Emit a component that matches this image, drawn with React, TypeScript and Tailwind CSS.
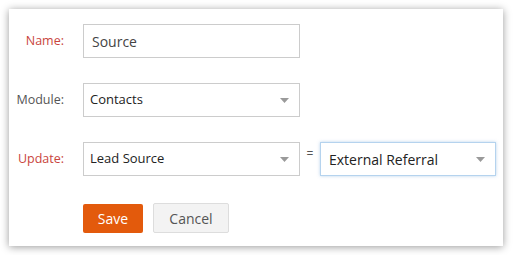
import React from "react";

function Caret() {
  return (
    <svg width="9" height="5" viewBox="0 0 9 5" className="shrink-0">
      <path d="M0 0 L9 0 L4.5 5 Z" fill="#9a9a9a" />
    </svg>
  );
}

function Label({ text, red }: { text: string; red?: boolean }) {
  return (
    <div
      className={`w-[74px] shrink-0 pr-[19px] text-right text-[12.5px] ${
        red ? "text-[#c9453d]" : "text-[#555555]"
      }`}
    >
      {text}
    </div>
  );
}

export default function App() {
  return (
    <div
      className="w-[513px] h-[255px] bg-white pt-[9px] pl-[9px]"
      style={{ fontFamily: '"Open Sans", "Noto Sans", sans-serif' }}
    >
      <div className="w-[494px] h-[237px] bg-white shadow-[0_1px_8px_rgba(0,0,0,0.4)] pt-[15px] flex flex-col">
        <div className="flex items-center h-[34px]">
          <Label text="Name:" red />
          <div className="w-[217px] h-[34px] border border-[#cccccc] flex items-center px-[8px] text-[14px] text-[#444444]">
            Source
          </div>
        </div>
        <div className="flex items-center h-[34px] mt-[25px]">
          <Label text="Module:" />
          <div className="w-[217px] h-[34px] border border-[#cccccc] flex items-center justify-between pl-[6px] pr-[10px] text-[13px] text-[#222222]">
            <span>Contacts</span>
            <Caret />
          </div>
        </div>
        <div className="flex items-center h-[34px] mt-[25px]">
          <Label text="Update:" red />
          <div className="w-[217px] h-[34px] border border-[#cccccc] flex items-center justify-between pl-[6px] pr-[10px] text-[13px] text-[#222222]">
            <span>Lead Source</span>
            <Caret />
          </div>
          <div className="w-[20px] text-center text-[12px] text-[#555555] self-start mt-[3px]">=</div>
          <div className="w-[176px] h-[34px] border border-[#b5d3ee] shadow-[0_0_3px_rgba(120,170,220,0.5)] flex items-center justify-between pl-[8px] pr-[10px] text-[14px] text-[#222222]">
            <span>External Referral</span>
            <Caret />
          </div>
        </div>
        <div className="flex items-center mt-[27px] pl-[74px] gap-[10px]">
          <div className="w-[60px] h-[29px] bg-[#e35a0c] rounded-[2px] text-white text-[14px] flex items-center justify-center">
            Save
          </div>
          <div className="w-[76px] h-[30px] bg-[#f3f3f3] border border-[#dddddd] rounded-[2px] text-[#555555] text-[14px] flex items-center justify-center">
            Cancel
          </div>
        </div>
      </div>
    </div>
  );
}
